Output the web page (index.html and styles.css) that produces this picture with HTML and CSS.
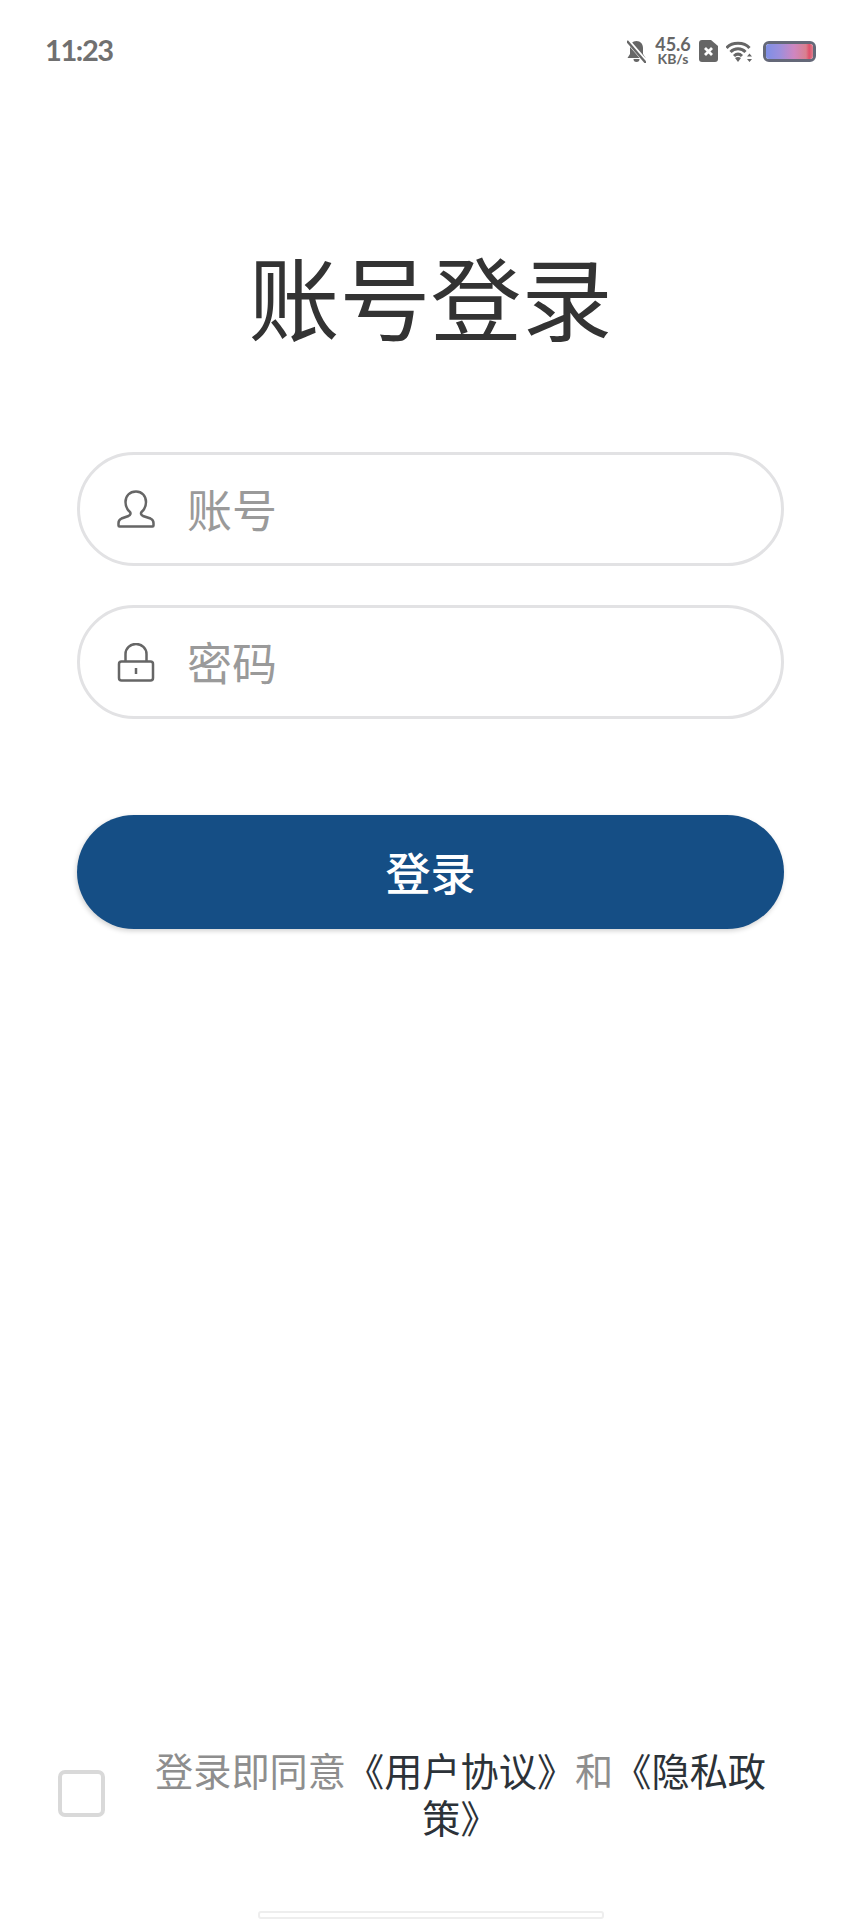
FILE: index.html
```html
<!DOCTYPE html>
<html lang="zh-CN">
<head>
  <meta charset="UTF-8">
  <meta name="viewport" content="width=device-width, initial-scale=1.0">
  <title>账号登录</title>
  <link rel="stylesheet" href="styles.css">
</head>
<body>
  <div class="page">
    <div class="status-bar">
      <span class="time">11:23</span>
      <div class="status-icons">
        <svg class="icon-bell" width="19" height="23" viewBox="0 0 19 23">
          <path d="M9.500 1C5.500 1 3 4 3 8v6l-2.500 4h18L16 14V8c0-4-2.500-7-6.500-7z" fill="#666"/>
          <path d="M6.500 19h6a3 3 0 0 1-6 0z" fill="#666"/>
          <path d="M0 0l19 22" stroke="#fff" stroke-width="4.500"/>
          <path d="M0 1l19 22" stroke="#666" stroke-width="2.400"/>
        </svg>
        <div class="speed">
          <span class="speed-value">45.6</span>
          <span class="speed-unit">KB/s</span>
        </div>
        <svg width="19" height="22" viewBox="0 0 19 22">
          <path d="M3 0h9l7 6v13a3 3 0 0 1-3 3H3a3 3 0 0 1-3-3V3a3 3 0 0 1 3-3z" fill="#666"/>
          <path d="M6 8l7 7M13 8l-7 7" stroke="#fff" stroke-width="2.800"/>
        </svg>
        <svg width="27" height="21" viewBox="0 0 27 21" fill="none" stroke="#666" stroke-width="3">
          <path d="M.5 7C6 .8 18 .8 23.500 7"/>
          <path d="M4.500 11c4-4.200 11-4.200 15 0"/>
          <path d="M8 15c2.500-2.400 5.500-2.400 8 0"/>
          <path d="M9 17l3 4 3-4c-1.800-1.200-4.200-1.200-6 0z" fill="#666" stroke="none"/>
          <path d="M23.500 12.500l2.500 3h-5zM23.500 21l2.500-3h-5z" fill="#666" stroke="none"/>
        </svg>
        <div class="battery"><div class="battery-fill"></div></div>
      </div>
    </div>

    <h1 class="title">账号登录</h1>

    <form class="login-form">
      <label class="field">
        <svg width="38" height="38" viewBox="0 0 38 38" fill="none" stroke="#666" stroke-width="2.500">
          <path d="M19 1.500c-6.500 0-10.500 4.500-10.500 10.500 0 4 2 8 4.500 10 1 1.500.5 3-1.500 4l-7 2.500c-2 1-3 2.500-3 4.500v2.500c0 .6.4 1 1 1h33c.6 0 1-.4 1-1V33c0-2-1-3.500-3-4.500L26 26c-2-1-2.500-2.500-1.500-4 2.500-2 4.500-6 4.500-10 0-6-4-10.500-10-10.500z"/>
        </svg>
        <input class="field-input" type="text" placeholder="账号">
      </label>
      <label class="field">
        <svg width="38" height="39" viewBox="0 0 38 39" fill="none" stroke="#666" stroke-width="2.500">
          <rect x="2" y="18.500" width="34" height="19" rx="2.500"/>
          <path d="M8.500 18.500V11a10.500 10 0 0 1 21 0v7.500"/>
          <path d="M19 25v6"/>
        </svg>
        <input class="field-input" type="password" placeholder="密码">
      </label>
      <button class="login-btn" type="button">登录</button>
    </form>

    <div class="agreement">
      <span class="checkbox"></span>
      <p class="agreement-text">登录即同意<a class="link">《用户协议》</a>和<a class="link">《隐私政策》</a></p>
    </div>

    <div class="home-bar"></div>
  </div>
</body>
</html>
```

FILE: styles.css
```css
* {
  margin: 0;
  padding: 0;
  box-sizing: border-box;
  font-family: "Noto Sans CJK SC", "Noto Sans", sans-serif;
}

body {
  background: #fff;
}

.page {
  height: 1920px;
  display: flex;
  flex-direction: column;
  overflow: hidden;
}

/* Status bar */
.status-bar {
  display: flex;
  justify-content: space-between;
  align-items: center;
  height: 24px;
  margin-top: 39px;
  padding: 0 45px;
}

.time {
  padding-bottom: 4px;
  font-family: Lato, sans-serif;
  font-size: 29px;
  letter-spacing: -1.4px;
  font-weight: 700;
  color: #707070;
}

.status-icons {
  display: flex;
  align-items: center;
  gap: 8px;
}

.icon-bell {
  margin-right: 1px;
}

.speed {
  display: flex;
  flex-direction: column;
  align-items: center;
  width: 36px;
  padding-bottom: 1px;
  color: #666;
}

.speed-value {
  font-family: Lato, sans-serif;
  font-weight: 700;
  font-size: 18px;
  line-height: 15px;
}

.speed-unit {
  font-family: Lato, sans-serif;
  font-weight: 700;
  font-size: 14px;
  line-height: 13px;
}

.battery {
  width: 53px;
  height: 21px;
  margin-left: 2px;
  border: 3px solid #646878;
  border-radius: 6px;
  overflow: hidden;
}

.battery-fill {
  height: 100%;
  background: linear-gradient(to right, #7f8fe6, #9d8fdc 30%, #cf86c0 60%, #d9808f 85%, #e0506a 92%, #d9808f);
}

/* Title */
.title {
  margin-top: 166px;
  font-size: 91px;
  line-height: 130px;
  font-weight: 400;
  color: #333;
  text-align: center;
}

/* Form */
.login-form {
  display: flex;
  flex-direction: column;
  margin: 93px 77px 0;
}

.field {
  display: flex;
  align-items: center;
  gap: 32px;
  height: 114px;
  margin-bottom: 39px;
  padding-left: 37px;
  border: 3px solid #e2e2e4;
  border-radius: 57px;
}

.field-input {
  flex: 1;
  min-width: 0;
  padding-bottom: 2px;
  border: none;
  outline: none;
  background: none;
  font-size: 45px;
  color: #333;
}

.field-input::placeholder {
  color: #9a9a9a;
}

.login-btn {
  height: 114px;
  margin-top: 57px;
  padding-bottom: 2px;
  border: none;
  border-radius: 57px;
  background: #154e85;
  box-shadow: -1px 2px 5px rgba(0,0,0,.18);
  color: #fff;
  font-size: 45px;
  font-weight: 500;
}

/* Agreement */
.agreement {
  display: flex;
  align-items: center;
  gap: 26px;
  margin-top: auto;
  padding: 0 71px 0 58px;
}

.checkbox {
  flex: none;
  width: 47px;
  height: 47px;
  border: 4px solid #d9d9d9;
  border-radius: 7px;
}

.agreement-text {
  flex: 1;
  font-size: 38.2px;
  line-height: 47px;
  color: #8e8e8e;
  text-align: center;
}

.link {
  color: #2c3238;
}

.home-bar {
  flex: none;
  width: 346px;
  height: 8px;
  margin: 71px auto 1px;
  border: 2px solid #eee;
  border-radius: 3px;
}
```
